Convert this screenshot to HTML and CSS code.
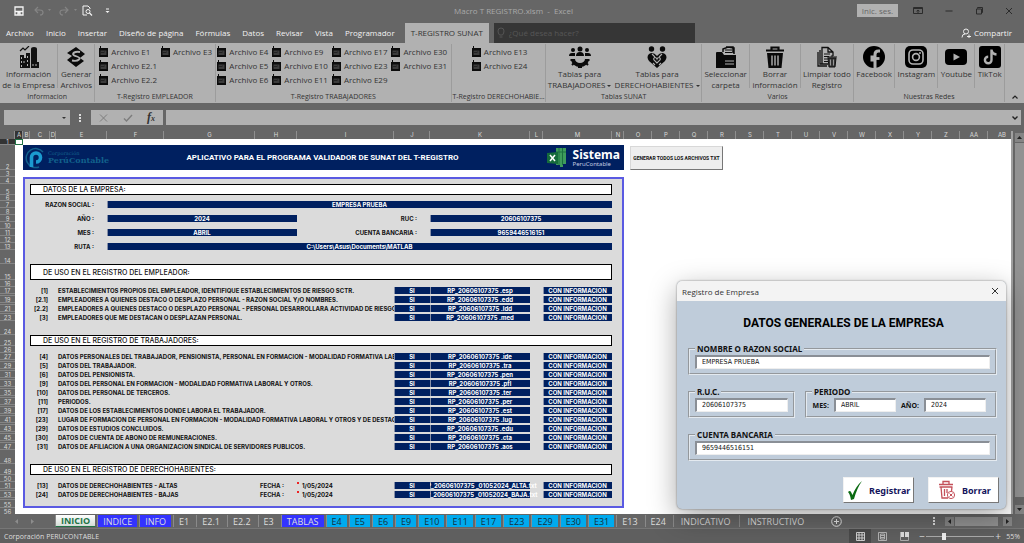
FILE: index.html
```html
<!DOCTYPE html>
<html lang="es">
  <head>
    <meta charset="UTF-8" />
    <meta name="viewport" content="width=device-width, initial-scale=1.0" />
    <title>Macro T REGISTRO.xlsm - Excel</title>
    <link rel="stylesheet" href="styles.css">
  </head>
  <body>
    <!-- shared icons -->
    <svg width="0" height="0" class="defs">
      <symbol id="file" viewBox="0 0 9 11">
        <path d="M0 2h1V0h1v2h7v9H0z" fill="#0c0c0c" />
        <path d="M1.5 4.5h6v4.500h-6z" fill="#3c3c3c" />
        <path d="M2 7l1-1 1 1 1-1 1 0" stroke="#111" stroke-width=".6" fill="none" />
      </symbol>
    </svg>

    <div class="title-bar">
      <div class="quick">
        <svg width="10" height="10" viewBox="0 0 10 10"><path d="M1 1h8v8H1zM1 5.500h8M4 9V7h2v2" fill="none" stroke="#f4f4f4" stroke-width="1.300" /></svg>
        <svg width="17" height="10" viewBox="0 0 17 10"><path d="M4 1L1 4l3 3M1 4h5q3 0 3 2.500T6 9" fill="none" stroke="#858585" stroke-width="1.200" /><path d="M14 3h3l-1.500 2z" fill="#858585" /></svg>
        <svg width="18" height="10" viewBox="0 0 18 10"><path d="M6 1l3 3-3 3M9 4H4Q1 4 1 6.500T4 9" fill="none" stroke="#858585" stroke-width="1.200" /><path d="M15 3h3l-1.500 2z" fill="#858585" /></svg>
        <svg width="11" height="11" viewBox="0 0 11 11"><path d="M5 10H1V1h5l2 2v1" fill="none" stroke="#f4f4f4" /><circle cx="6" cy="6.500" r="2" fill="none" stroke="#f4f4f4" /><path d="M7.500 8l2.500 2.500" stroke="#f4f4f4" stroke-width="1.300" /></svg>
        <svg width="5" height="6" viewBox="0 0 5 6"><path d="M1 1h3" stroke="#f4f4f4" /><path d="M0.500 3h4l-2 2z" fill="#f4f4f4" /></svg>
      </div>
      <div class="doc-name">Macro T REGISTRO.xlsm &nbsp;-&nbsp; Excel</div>
      <div class="window-tools">
        <button class="sign-in">Inic. ses.</button>
        <svg width="10" height="8" viewBox="0 0 10 8"><path d="M.5 .5h9v6h-9zM1 1.500h8M5 6V3M3.500 4.300L5 3l1.500 1.300" fill="none" stroke="#2b2b2b" /></svg>
        <svg width="8" height="8" viewBox="0 0 8 8"><path d="M0.500 4h7" stroke="#2b2b2b" /></svg>
        <svg width="8" height="8" viewBox="0 0 8 8"><path d="M1.500 2h5v5h-5zM2.500 1.500v-1h5v5h-1" fill="none" stroke="#2b2b2b" /></svg>
        <svg width="8" height="8" viewBox="0 0 8 8"><path d="M1 1l6 6M7 1L1 7" stroke="#2b2b2b" /></svg>
      </div>
    </div>

    <nav class="menu">
      <a href="#">Archivo</a>
      <a href="#">Inicio</a>
      <a href="#">Insertar</a>
      <a href="#">Diseño de página</a>
      <a href="#">Fórmulas</a>
      <a href="#">Datos</a>
      <a href="#">Revisar</a>
      <a href="#">Vista</a>
      <a href="#">Programador</a>
      <a href="#" class="active">T-REGISTRO SUNAT</a>
      <label class="ask">
        <svg width="8" height="12" viewBox="0 0 8 12"><path d="M2.500 8Q1 6 1 4a3 3 0 0 1 6 0q0 2-1.500 4zM2.500 10h3" fill="none" stroke="#555" /></svg>
        <input type="text" placeholder="¿Qué desea hacer?" />
      </label>
      <a href="#" class="share">
        <svg width="10" height="10" viewBox="0 0 10 10"><circle cx="5" cy="3.500" r="2.500" fill="none" stroke="#eee" /><path d="M1 9.500Q1 6 4 6M6 8.500h4M8 6.500v3.500" fill="none" stroke="#eee" /></svg>
        Compartir
      </a>
    </nav>

    <div class="ribbon">
      <section class="group g-info">
        <div class="tools">
          <button class="big">
            <svg width="22" height="22" viewBox="0 0 22 22"><path d="M2 5l3-3 2 2 4-4" fill="none" stroke="#111" stroke-width="1.200" /><path d="M13 22V3q0-2 3-2t3 2v13h2v6zM2 9h4v3h2V7h4v15H2z" fill="#111" /><path d="M3.500 11v2M3.500 15v2M6 15v2M9.500 10v2M9.500 14v2M3.500 19v2M9.500 18v2M15 18v2M18 18v2" stroke="#b1b1b1" stroke-width="1" /></svg>
            <span>Información<br />de la Empresa</span>
          </button>
          <button class="big line">
            <svg width="22" height="22" viewBox="0 0 22 22"><path d="M11 1l9 7-5 4 4 3-8 6-9-7 5-4-5-3z" fill="#0a0a0a" /><path d="M15 6q-6-1-7 2 0 1.500 4 2.500 4 1.500 2 3-2 2-7 1" fill="none" stroke="#b1b1b1" stroke-width="1.800" /></svg>
            <span>Generar<br />Archivos</span>
          </button>
        </div>
        <h3>Informacion</h3>
      </section>
      <section class="group g-empleador">
        <div class="tools">
          <div class="files">
            <button><svg><use href="#file" /></svg>Archivo E1</button>
            <button><svg><use href="#file" /></svg>Archivo E2.1</button>
            <button><svg><use href="#file" /></svg>Archivo E2.2</button>
          </div>
          <div class="files">
            <button><svg><use href="#file" /></svg>Archivo E3</button>
          </div>
        </div>
        <h3>T-Registro EMPLEADOR</h3>
      </section>
      <section class="group g-trabajadores">
        <div class="tools">
          <div class="files">
            <button><svg><use href="#file" /></svg>Archivo E4</button>
            <button><svg><use href="#file" /></svg>Archivo E5</button>
            <button><svg><use href="#file" /></svg>Archivo E6</button>
          </div>
          <div class="files">
            <button><svg><use href="#file" /></svg>Archivo E9</button>
            <button><svg><use href="#file" /></svg>Archivo E10</button>
            <button><svg><use href="#file" /></svg>Archivo E11</button>
          </div>
          <div class="files">
            <button><svg><use href="#file" /></svg>Archivo E17</button>
            <button><svg><use href="#file" /></svg>Archivo E23</button>
            <button><svg><use href="#file" /></svg>Archivo E29</button>
          </div>
          <div class="files">
            <button><svg><use href="#file" /></svg>Archivo E30</button>
            <button><svg><use href="#file" /></svg>Archivo E31</button>
          </div>
        </div>
        <h3>T-Registro TRABAJADORES</h3>
      </section>
      <section class="group g-derecho">
        <div class="tools">
          <div class="files">
            <button><svg><use href="#file" /></svg>Archivo E13</button>
            <button><svg><use href="#file" /></svg>Archivo E24</button>
          </div>
        </div>
        <h3>T-Registro DERECHOHABIE...</h3>
      </section>
      <section class="group g-tablas">
        <div class="tools">
          <button class="big">
            <svg width="22" height="22" viewBox="0 0 22 22"><g fill="#0a0a0a"><circle cx="4" cy="4" r="2" /><circle cx="11" cy="3" r="2.500" /><circle cx="18" cy="4" r="2" /><path d="M0 10q0-3 3-3h3v3zM7 10q0-4 4-4t4 4zM22 10q0-3-3-3h-3v3z" /></g><path d="M4 13a7 6 0 0 0 14 0" fill="none" stroke="#0a0a0a" stroke-width="4" /><path d="M1.500 14h2M3 19l2-2M9 21h4M17 17l2 2M18.500 14h2" stroke="#0a0a0a" stroke-width="2" /></svg>
            <span>Tablas para<br />TRABAJADORES <i></i></span>
          </button>
          <button class="big">
            <svg width="22" height="22" viewBox="0 0 22 22"><g fill="#0a0a0a"><circle cx="5.500" cy="3" r="2.700" /><circle cx="16.500" cy="3" r="2.700" /><path d="M11 22L3 15Q0 11 3 8q4-3 8 2 4-5 8-2 3 3 0 7z" /></g><path d="M11 17l-3-3q-1-2 1-2.500 1.500 0 2 1.500.5-1.500 2-1.500 2 .5 1 2.500zM6 8l3 3M16 8l-3 3M7 17l2 2M15 17l-2 2" fill="none" stroke="#b1b1b1" stroke-width="1.100" /></svg>
            <span>Tablas para<br />DERECHOHABIENTES <i></i></span>
          </button>
        </div>
        <h3>Tablas SUNAT</h3>
      </section>
      <section class="group g-varios">
        <div class="tools">
          <button class="big">
            <svg width="22" height="22" viewBox="0 0 22 22"><path d="M1 22V7q0-1 1-1h5l2 3h12v13z" fill="#0a0a0a" /><path d="M8 6V3l5-2 6 1v6M11 1h7v6" fill="none" stroke="#0a0a0a" stroke-width="1.500" /><path d="M10 4h7M10 6.500h7" stroke="#0a0a0a" /><path d="M10 15h9M10 18h9" stroke="#b1b1b1" /></svg>
            <span>Seleccionar<br />carpeta</span>
          </button>
          <button class="big line">
            <svg width="22" height="22" viewBox="0 0 22 22"><path d="M3 7h16l-1.500 15h-13z" fill="#0a0a0a" /><path d="M2 4.500h18M7.500 4V1.500h7V4" fill="none" stroke="#0a0a0a" stroke-width="2.200" /><path d="M8 9.500v10M11 9.500v10M14 9.500v10" stroke="#b1b1b1" stroke-width="1.400" /></svg>
            <span>Borrar<br />información</span>
          </button>
          <button class="big line">
            <svg width="22" height="22" viewBox="0 0 22 22"><path d="M2 6v14h9M4 4v14h7M12 18H6V1.500h6l5 4.500v4M12 1.500V6h5" fill="none" stroke="#111" stroke-width="1.300" /><path d="M8 8h6M8 10.500h5M8 13h4M8 15.500h4" stroke="#111" stroke-width="1.200" /><path d="M12 12h8l-1 9h-6zM11 11h10M15 10h2" stroke="#111" fill="#333" /><path d="M14.500 13.500v6M17.500 13.500v6" stroke="#b1b1b1" stroke-width=".8" /></svg>
            <span>Limpiar todo<br />Registro</span>
          </button>
        </div>
        <h3>Varios</h3>
      </section>
      <section class="group g-redes">
        <div class="tools">
          <button class="big">
            <svg width="22" height="22" viewBox="0 0 22 22"><circle cx="11" cy="11" r="11" fill="#000" /><path d="M12 22v-8H9v-3h3V8.500Q12 5 15.500 5H17" fill="none" stroke="#b1b1b1" stroke-width="3" /><path d="M9 12.500h7.500" stroke="#b1b1b1" stroke-width="2.800" /></svg>
            <span>Facebook</span>
          </button>
          <button class="big line">
            <svg width="22" height="22" viewBox="0 0 22 22"><rect width="22" height="22" rx="5" /><rect x="4" y="4" width="14" height="14" rx="4" fill="none" stroke="#b1b1b1" stroke-width="1.600" /><circle cx="11" cy="11" r="3.400" fill="none" stroke="#b1b1b1" stroke-width="1.600" /><circle cx="15" cy="7" r="1" fill="#b1b1b1" /></svg>
            <span>Instagram</span>
          </button>
          <button class="big line">
            <svg width="22" height="22" viewBox="0 0 22 22"><rect y="3" width="22" height="16" rx="4" /><path d="M8.500 7.500l6.500 3.500-6.500 3.500z" fill="#b1b1b1" /></svg>
            <span>Youtube</span>
          </button>
          <button class="big line">
            <svg width="22" height="22" viewBox="0 0 22 22"><rect width="22" height="22" rx="3" /><path d="M12.500 3.500v10.500a3.300 3.300 0 1 1-3.300-3.300M12.500 4q.5 4 5 4.500" fill="none" stroke="#b1b1b1" stroke-width="2.400" /></svg>
            <span>TikTok</span>
          </button>
        </div>
        <h3>Nuestras Redes</h3>
      </section>
      <button class="collapse" aria-label="Contraer la cinta"><svg width="6" height="4" viewBox="0 0 6 4"><path d="M.5 3.500L3 1l2.500 2.500" fill="none" stroke="#222" stroke-width="1.200" /></svg></button>
    </div>

    <div class="formula-bar">
      <label class="name-box"><input type="text" aria-label="Cuadro de nombres" /><i></i></label>
      <span class="dots"></span>
      <div class="fx">
        <svg width="9" height="8" viewBox="0 0 9 8"><path d="M1 .5l7 7M8 .5l-7 7" stroke="#7c7c7c" /></svg>
        <svg width="10" height="8" viewBox="0 0 10 8"><path d="M1 4.500L3.500 7 9 1" fill="none" stroke="#7c7c7c" stroke-width="1.400" /></svg>
        <em>f<small>x</small></em>
      </div>
      <label class="formula"><input type="text" aria-label="Barra de fórmulas" /><svg width="6" height="4" viewBox="0 0 6 4"><path d="M.5 .5L3 3 5.500 .5" fill="none" stroke="#222" stroke-width="1.400" /></svg></label>
    </div>

    <main class="sheet">
      <div class="cells">
        <table>
          <colgroup>
            <col class="w15"><col class="w8"><col class="w7"><col class="w20"><col class="w6"><col class="w51"><col class="w57"><col class="w91"><col class="w42"><col class="w97"><col class="w36"><col class="w100"><col class="w13"><col class="w69"><col class="w12">
            <col class="w28" span="14">
          </colgroup>
          <thead>
            <tr>
              <th class="corner"></th><th class="on">A</th><th>B</th><th>C</th><th>D</th><th>E</th><th>F</th><th>G</th><th>H</th><th>I</th><th>J</th><th>K</th><th>L</th><th>M</th><th>N</th><th>O</th><th>P</th><th>Q</th><th>R</th><th>S</th><th>T</th><th>U</th><th>V</th><th>W</th><th>X</th><th>Y</th><th>Z</th><th>AA</th><th>AB</th>
            </tr>
          </thead>
          <tbody>
            <tr class="short"><th class="on">1</th><td class="cursor"></td></tr>
            <tr class="head">
              <th>2</th><td></td>
              <td colspan="13" class="banner">
                <div class="banner-row">
                  <div class="brand">
                    <svg width="20" height="22" viewBox="0 0 20 22"><path d="M18 5A9.500 9.500 0 1 0 14 20" fill="none" stroke="#12618c" stroke-width="1.500" /><path d="M6.500 20V10.500a4.500 4.500 0 1 1 4.500 4.500" fill="none" stroke="#1b9ad0" stroke-width="3.600" /></svg>
                    <p><small>Corporación</small>PerúContable</p>
                  </div>
                  <h1>APLICATIVO PARA EL PROGRAMA VALIDADOR DE SUNAT DEL T-REGISTRO</h1>
                  <div class="system">
                    <svg width="20" height="21" viewBox="0 0 20 21"><path d="M9 1h10v16h-3v3h-3v-2H9z" fill="#3f9c5c" /><path d="M12 1v17M15.500 1v17M9 5h10" stroke="#1c7040" /><path d="M0 6l11-1v12L0 16z" fill="#156c3c" /><path d="M3 8l5 6M8 8l-5 6" stroke="#fff" stroke-width="1.500" /></svg>
                    <p>Sistema<small>PeruContable</small></p>
                  </div>
                </div>
              </td>
            </tr>
            <tr><th>3</th><td></td></tr>
          </tbody>
          <tbody class="panel">
            <tr><th>4</th><td class="out" rowspan="52"></td><td class="left" rowspan="52"></td><td colspan="11" class="top"></td><td class="right" rowspan="52"></td></tr>
            <tr class="sec"><th>5</th><td colspan="11" class="box">DATOS DE LA EMPRESA:</td></tr>
            <tr class="short"><th>6</th><td colspan="11"></td></tr>
            <tr><th>7</th><td colspan="3" class="name">RAZON SOCIAL :</td><td colspan="8" class="bar">EMPRESA PRUEBA</td></tr>
            <tr><th>8</th><td colspan="11"></td></tr>
            <tr><th>9</th><td colspan="3" class="name">AÑO :</td><td colspan="3" class="bar">2024</td><td colspan="2" class="name">RUC :</td><td colspan="3" class="bar">20606107375</td></tr>
            <tr><th>10</th><td colspan="11"></td></tr>
            <tr><th>11</th><td colspan="3" class="name">MES :</td><td colspan="3" class="bar">ABRIL</td><td colspan="2" class="name">CUENTA BANCARIA :</td><td colspan="3" class="bar">9659446516151</td></tr>
            <tr><th>12</th><td colspan="11"></td></tr>
            <tr><th>13</th><td colspan="3" class="name">RUTA :</td><td colspan="8" class="bar">C:\Users\Asus\Documents\MATLAB</td></tr>
            <tr class="tall"><th>14</th><td colspan="11"></td></tr>
            <tr class="sec high"><th>15</th><td colspan="11" class="box">DE USO EN EL REGISTRO DEL EMPLEADOR:</td></tr>
            <tr><th>16</th><td colspan="11"></td></tr>
            <tr><th>17</th><td class="num">[1]</td><td colspan="6" class="text">ESTABLECIMIENTOS PROPIOS DEL EMPLEADOR, IDENTIFIQUE ESTABLECIMIENTOS DE RIESGO SCTR.</td><td class="bar">SI</td><td class="bar">RP_20606107375 .esp</td><td></td><td class="bar">CON INFORMACIÓN</td></tr>
            <tr class="gap"><th></th><td colspan="11"></td></tr>
            <tr><th>19</th><td class="num">[2.1]</td><td colspan="6" class="text">EMPLEADORES A QUIENES DESTACO O DESPLAZO PERSONAL - RAZON SOCIAL Y/O NOMBRES.</td><td class="bar">SI</td><td class="bar">RP_20606107375 .edd</td><td></td><td class="bar">CON INFORMACIÓN</td></tr>
            <tr class="gap"><th></th><td colspan="11"></td></tr>
            <tr><th>21</th><td class="num">[2.2]</td><td colspan="6" class="text">EMPLEADORES A QUIENES DESTACO O DESPLAZO PERSONAL - PERSONAL DESARROLLARÁ ACTIVIDAD DE RIESGO</td><td class="bar">SI</td><td class="bar">RP_20606107375 .ldd</td><td></td><td class="bar">CON INFORMACIÓN</td></tr>
            <tr class="gap"><th></th><td colspan="11"></td></tr>
            <tr><th>23</th><td class="num">[3]</td><td colspan="6" class="text">EMPLEADORES QUE ME DESTACAN O DESPLAZAN PERSONAL.</td><td class="bar">SI</td><td class="bar">RP_20606107375 .med</td><td></td><td class="bar">CON INFORMACIÓN</td></tr>
            <tr class="tall"><th>24</th><td colspan="11"></td></tr>
            <tr class="sec"><th>25</th><td colspan="11" class="box">DE USO EN EL REGISTRO DE TRABAJADORES:</td></tr>
            <tr><th>26</th><td colspan="11"></td></tr>
            <tr><th>27</th><td class="num">[4]</td><td colspan="6" class="text">DATOS PERSONALES DEL TRABAJADOR, PENSIONISTA, PERSONAL EN FORMACIÓN - MODALIDAD FORMATIVA LABORAL</td><td class="bar">SI</td><td class="bar">RP_20606107375 .ide</td><td></td><td class="bar">CON INFORMACIÓN</td></tr>
            <tr class="gap"><th></th><td colspan="11"></td></tr>
            <tr><th>29</th><td class="num">[5]</td><td colspan="6" class="text">DATOS DEL TRABAJADOR.</td><td class="bar">SI</td><td class="bar">RP_20606107375 .tra</td><td></td><td class="bar">CON INFORMACIÓN</td></tr>
            <tr class="gap"><th></th><td colspan="11"></td></tr>
            <tr><th>31</th><td class="num">[6]</td><td colspan="6" class="text">DATOS DEL PENSIONISTA.</td><td class="bar">SI</td><td class="bar">RP_20606107375 .pen</td><td></td><td class="bar">CON INFORMACIÓN</td></tr>
            <tr class="gap"><th></th><td colspan="11"></td></tr>
            <tr><th>33</th><td class="num">[9]</td><td colspan="6" class="text">DATOS DEL PERSONAL EN FORMACIÓN - MODALIDAD FORMATIVA LABORAL Y OTROS.</td><td class="bar">SI</td><td class="bar">RP_20606107375 .pfl</td><td></td><td class="bar">CON INFORMACIÓN</td></tr>
            <tr class="gap"><th></th><td colspan="11"></td></tr>
            <tr><th>35</th><td class="num">[10]</td><td colspan="6" class="text">DATOS DEL PERSONAL DE TERCEROS.</td><td class="bar">SI</td><td class="bar">RP_20606107375 .ter</td><td></td><td class="bar">CON INFORMACIÓN</td></tr>
            <tr class="gap"><th></th><td colspan="11"></td></tr>
            <tr><th>37</th><td class="num">[11]</td><td colspan="6" class="text">PERÍODOS.</td><td class="bar">SI</td><td class="bar">RP_20606107375 .per</td><td></td><td class="bar">CON INFORMACIÓN</td></tr>
            <tr class="gap"><th></th><td colspan="11"></td></tr>
            <tr><th>39</th><td class="num">[17]</td><td colspan="6" class="text">DATOS DE LOS ESTABLECIMIENTOS DONDE LABORA EL TRABAJADOR.</td><td class="bar">SI</td><td class="bar">RP_20606107375 .est</td><td></td><td class="bar">CON INFORMACIÓN</td></tr>
            <tr class="gap"><th></th><td colspan="11"></td></tr>
            <tr><th>41</th><td class="num">[23]</td><td colspan="6" class="text">LUGAR DE FORMACIÓN DE PERSONAL EN FORMACIÓN - MODALIDAD FORMATIVA LABORAL Y OTROS Y DE DESTAQUE</td><td class="bar">SI</td><td class="bar">RP_20606107375 .lug</td><td></td><td class="bar">CON INFORMACIÓN</td></tr>
            <tr class="gap"><th></th><td colspan="11"></td></tr>
            <tr><th>43</th><td class="num">[29]</td><td colspan="6" class="text">DATOS DE ESTUDIOS CONCLUIDOS.</td><td class="bar">SI</td><td class="bar">RP_20606107375 .edu</td><td></td><td class="bar">CON INFORMACIÓN</td></tr>
            <tr class="gap"><th></th><td colspan="11"></td></tr>
            <tr><th>45</th><td class="num">[30]</td><td colspan="6" class="text">DATOS DE CUENTA DE ABONO DE REMUNERACIONES.</td><td class="bar">SI</td><td class="bar">RP_20606107375 .cta</td><td></td><td class="bar">CON INFORMACIÓN</td></tr>
            <tr class="gap"><th></th><td colspan="11"></td></tr>
            <tr><th>47</th><td class="num">[31]</td><td colspan="6" class="text">DATOS DE AFILIACIÓN A UNA ORGANIZACIÓN SINDICAL DE SERVIDORES PÚBLICOS.</td><td class="bar">SI</td><td class="bar">RP_20606107375 .aos</td><td></td><td class="bar">CON INFORMACIÓN</td></tr>
            <tr class="tall"><th>48</th><td colspan="11"></td></tr>
            <tr class="sec"><th>49</th><td colspan="11" class="box">DE USO EN EL REGISTRO DE DERECHOHABIENTES:</td></tr>
            <tr><th>50</th><td colspan="11"></td></tr>
            <tr><th>51</th><td class="num">[13]</td><td colspan="4" class="text">DATOS DE DERECHOHABIENTES - ALTAS</td><td class="date">FECHA :</td><td class="date note">1/05/2024</td><td class="bar">SI</td><td class="bar spill"><div>RP_20606107375 _01052024_ALTA.txt</div></td><td></td><td class="bar">CON INFORMACIÓN</td></tr>
            <tr class="gap"><th></th><td colspan="11"></td></tr>
            <tr><th>53</th><td class="num">[24]</td><td colspan="4" class="text">DATOS DE DERECHOHABIENTES - BAJAS</td><td class="date">FECHA :</td><td class="date note">1/05/2024</td><td class="bar">SI</td><td class="bar spill"><div>RP_20606107375 _01052024_BAJA.txt</div></td><td></td><td class="bar">CON INFORMACIÓN</td></tr>
            <tr class="gap"><th></th><td colspan="11"></td></tr>
            <tr class="last"><th>55</th><td colspan="11" class="bottom"></td></tr>
          </tbody>
          <tbody>
            <tr><th>56</th></tr>
          </tbody>
        </table>
        <button class="generate">GENERAR TODOS LOS ARCHIVOS TXT</button>
      </div>
      <div class="scroll-v">
        <button aria-label="Arriba"><svg width="5" height="3"><path d="M0 3h5L2.500 0z" fill="#222" /></svg></button>
        <div class="thumb"></div>
        <button aria-label="Abajo"><svg width="5" height="3"><path d="M0 0h5L2.500 3z" fill="#222" /></svg></button>
      </div>

      <form class="dialog">
        <div class="dialog-title">
          <span>Registro de Empresa</span>
          <button type="button" aria-label="Cerrar"><svg width="8" height="8" viewBox="0 0 8 8"><path d="M1 1l6 6M7 1L1 7" stroke="#333" /></svg></button>
        </div>
        <div class="dialog-body">
          <h2>DATOS GENERALES DE LA EMPRESA</h2>
          <fieldset>
            <legend><label for="razon">NOMBRE O RAZON SOCIAL</label></legend>
            <input type="text" id="razon" value="EMPRESA PRUEBA" />
          </fieldset>
          <div class="pair">
            <fieldset class="ruc">
              <legend><label for="ruc">R.U.C.</label></legend>
              <input type="text" id="ruc" value="20606107375" />
            </fieldset>
            <fieldset class="period">
              <legend>PERIODO</legend>
              <div class="period-row">
                <label for="mes">MES:</label>
                <input type="text" id="mes" value="ABRIL" />
                <label for="anio">AÑO:</label>
                <input type="text" id="anio" value="2024" />
              </div>
            </fieldset>
          </div>
          <fieldset>
            <legend><label for="cuenta">CUENTA BANCARIA</label></legend>
            <input type="text" id="cuenta" value="9659446516151" />
          </fieldset>
          <div class="actions">
            <button type="button">
              <svg width="16" height="19" viewBox="0 0 16 19"><path d="M1 11q2-2 3 0l1.500 3Q9 5 15 0q-5 7-8 18l-3 1Q3 13 1 11z" fill="#0b6a12" /></svg>
              Registrar
            </button>
            <button type="button">
              <svg width="18" height="20" viewBox="0 0 18 20"><path d="M1 4.500h14M5 4V1.500h6V4M1.500 7h13M3 7l1 11h6M14 7l-.5 4M6.500 9v7M9 9v4" fill="none" stroke="#c4505a" stroke-width="1.300" /><circle cx="13" cy="15" r="3.600" fill="#fff" stroke="#c4505a" /><path d="M11.500 13.500l3 3M14.500 13.500l-3 3" stroke="#c4505a" /></svg>
              Borrar
            </button>
          </div>
        </div>
      </form>
    </main>

    <div class="tabs">
      <div class="arrows">
        <svg width="3" height="5"><path d="M3 0v5L0 2.500z" fill="#8d8d8d" /></svg>
        <svg width="3" height="5"><path d="M0 0v5l3-2.500z" fill="#8d8d8d" /></svg>
      </div>
      <button class="current">INICIO</button>
      <button class="indigo">INDICE</button>
      <button class="indigo">INFO</button>
      <button>E1</button>
      <button>E2.1</button>
      <button>E2.2</button>
      <button>E3</button>
      <button class="indigo">TABLAS</button>
      <button class="sky">E4</button>
      <button class="sky">E5</button>
      <button class="sky">E6</button>
      <button class="sky">E9</button>
      <button class="sky">E10</button>
      <button class="sky">E11</button>
      <button class="sky">E17</button>
      <button class="sky">E23</button>
      <button class="sky">E29</button>
      <button class="sky">E30</button>
      <button class="sky">E31</button>
      <button>E13</button>
      <button>E24</button>
      <button class="long">INDICATIVO</button>
      <button class="long">INSTRUCTIVO</button>
      <svg class="add" width="11" height="11" viewBox="0 0 11 11"><circle cx="5.500" cy="5.500" r="4.800" fill="none" stroke="#e4e4e4" /><path d="M3 5.500h5M5.500 3v5" stroke="#e4e4e4" /></svg>
      <span class="dots"></span>
      <div class="scroll-h">
        <button aria-label="Izquierda"><svg width="3" height="5"><path d="M3 0v5L0 2.500z" fill="#222" /></svg></button>
        <div class="thumb"></div>
        <button aria-label="Derecha"><svg width="3" height="5"><path d="M0 0v5l3-2.500z" fill="#222" /></svg></button>
      </div>
    </div>

    <footer class="status">
      <span class="company">Corporación PERUCONTABLE</span>
      <button class="view on" aria-label="Normal"><svg width="9" height="9" viewBox="0 0 9 9"><path d="M.5 .5h8v8h-8zM.5 3h8M.5 6h8M3 .5v8M6 .5v8" fill="none" stroke="#ddd" stroke-width=".9" /></svg></button>
      <button class="view" aria-label="Diseño de página"><svg width="9" height="9" viewBox="0 0 9 9"><path d="M.5 .5h8v8h-8zM2.500 2h4v5h-4zM3 3.500h3M3 5.500h3" fill="none" stroke="#bbb" stroke-width=".9" /></svg></button>
      <button class="view" aria-label="Salto de página"><svg width="9" height="9" viewBox="0 0 9 9"><path d="M0 0h4v5H0zM5 0h4v5H5z" fill="#ddd" /><path d="M.5 0v8.500h8V5" fill="none" stroke="#aaa" /></svg></button>
      <span class="sign">−</span>
      <input type="range" min="0" max="100" value="25" aria-label="Zoom" />
      <span class="sign">+</span>
      <span class="zoom">55%</span>
    </footer>
  </body>
</html>
```
FILE: styles.css
```css
* {
  box-sizing: border-box;
}

body {
  margin: 0;
  height: 100vh;
  display: flex;
  flex-direction: column;
  overflow: hidden;
  background-color: #666666;
  color: #333333;
  font-family: "Open Sans", "Noto Sans", sans-serif;
  font-size: 8px;
}

button,
input {
  margin: 0;
  padding: 0;
  border: none;
  border-radius: 0;
  outline: none;
  background: none;
  color: inherit;
  font: inherit;
}

svg {
  display: block;
  flex: none;
}

a {
  color: inherit;
  text-decoration: none;
}

.defs {
  position: absolute;
}

/* title bar */
.title-bar {
  display: flex;
  align-items: center;
  height: 23px;
  padding: 0 11px 2px 14px;
}

.quick,
.window-tools {
  display: flex;
  flex: 1;
  align-items: center;
}

.quick {
  gap: 8px;
}

.quick svg:first-child {
  margin-right: 2px;
}

.quick svg:nth-child(4) {
  margin-left: -3px;
}

.quick svg:last-child {
  margin-left: 4px;
}

.doc-name {
  color: #a9a9a9;
}

.window-tools {
  justify-content: flex-end;
  gap: 22px;
}

.sign-in {
  width: 41px;
  height: 13px;
  margin-right: -7px;
  background-color: #b1b1b1;
  color: #666666;
  line-height: 13px;
}

/* ribbon tabs */
.menu {
  display: flex;
  align-items: stretch;
  height: 20px;
  color: #f2f2f2;
  line-height: 20px;
  white-space: nowrap;
}

.menu a {
  padding: 0 6px;
}

.menu a.active {
  margin-left: 4px;
  background-color: #b1b1b1;
  color: #333333;
}

.ask {
  display: flex;
  align-items: center;
  gap: 4px;
  width: 201px;
  margin-left: 5px;
  padding-left: 3px;
  background-color: #363636;
}

.ask input::placeholder {
  color: #575757;
  opacity: 1;
}

.menu .share {
  display: flex;
  align-items: center;
  gap: 3px;
  margin-left: auto;
  padding-right: 12px;
}

/* ribbon */
.ribbon {
  display: flex;
  height: 60px;
  padding-top: 1px;
  background-color: #b1b1b1;
}

.group {
  display: flex;
  flex-direction: column;
  flex-basis: 0;
  min-width: 0;
  margin-bottom: 1px;
  border-right: 1px solid #9c9c9c;
}

.g-info {
  flex-grow: 95;
}

.g-empleador {
  flex-grow: 120;
}

.g-trabajadores {
  flex-grow: 237;
}

.g-derecho {
  flex-grow: 94;
}

.g-tablas {
  flex-grow: 156;
}

.g-varios {
  flex-grow: 152;
}

.g-redes {
  flex-grow: 151;
}

.group h3 {
  margin: 0;
  font-size: 7px;
  font-weight: 400;
  line-height: 10px;
  text-align: center;
  white-space: nowrap;
}

.tools {
  display: flex;
  flex: 1;
  justify-content: center;
}

.big {
  display: flex;
  flex: 1 1 auto;
  flex-direction: column;
  align-items: center;
  padding-top: 2px;
  line-height: 11px;
  white-space: nowrap;
}

.big.line {
  height: 44px;
  border-left: 1px solid #9c9c9c;
}

.big i,
.name-box i {
  display: inline-block;
  border: 2px solid transparent;
  border-top-color: #333333;
  border-bottom: none;
  vertical-align: middle;
}

.files {
  flex: 1;
  padding-left: 4px;
}

.g-trabajadores .tools {
  padding-right: 6px;
}

.g-derecho .files {
  padding-left: 20px;
}

.files button {
  display: flex;
  align-items: center;
  gap: 3px;
  height: 14px;
  white-space: nowrap;
}

.files svg {
  width: 9px;
  height: 11px;
}

.collapse {
  display: flex;
  align-items: flex-end;
  justify-content: center;
  width: 19px;
  padding-bottom: 4px;
}

/* formula bar */
.formula-bar {
  display: flex;
  align-items: center;
  height: 28px;
  padding: 1px 3px 0 4px;
}

.name-box,
.fx,
.formula {
  display: flex;
  align-items: center;
  height: 15px;
  background-color: #b1b1b1;
}

.name-box {
  width: 66px;
  padding-right: 4px;
}

.name-box input,
.formula input {
  flex: 1;
  min-width: 0;
}

.dots {
  width: 2px;
  height: 8px;
  background: repeating-linear-gradient(#dddddd 0 2px, transparent 2px 3px);
}

.formula-bar .dots {
  margin: 0 10px 0 9px;
}

.fx {
  justify-content: space-between;
  width: 72px;
  padding: 0 8px;
}

.fx em {
  font-family: "Liberation Serif", serif;
  font-size: 12px;
  font-weight: 700;
  line-height: 14px;
}

.fx small {
  font-size: 8px;
}

.formula {
  flex: 1;
  margin-left: 3px;
  padding-right: 3px;
}

/* worksheet */
.sheet {
  position: relative;
  display: flex;
  flex: 1;
  min-height: 0;
}

.cells {
  position: relative;
  flex: 1;
  overflow: hidden;
  background-color: #ffffff;
}

table {
  width: 1016px;
  table-layout: fixed;
  border-spacing: 0;
  color: #111111;
  font-family: Inter, "Liberation Sans", sans-serif;
  font-size: 6px;
  font-weight: 700;
  line-height: 7px;
  white-space: nowrap;
}

.w6 { width: 6px; }
.w7 { width: 7px; }
.w8 { width: 8px; }
.w12 { width: 12px; }
.w13 { width: 13px; }
.w15 { width: 15px; }
.w20 { width: 20px; }
.w28 { width: 28px; }
.w36 { width: 36px; }
.w42 { width: 42px; }
.w51 { width: 51px; }
.w57 { width: 57px; }
.w69 { width: 69px; }
.w91 { width: 91px; }
.w97 { width: 97px; }
.w100 { width: 100px; }

td,
th {
  padding: 0;
}

tr {
  height: 7px;
}

th {
  background-color: #666666;
  color: #d8d8d8;
  font-weight: 400;
  vertical-align: bottom;
  box-shadow: inset 0 -1px #858585;
}

thead th {
  height: 8px;
  line-height: 8px;
  box-shadow: inset -1px 0 #8f8f8f;
}

th.on {
  background-color: #333333;
}

.short {
  height: 6px;
  line-height: 6px;
}

.head {
  height: 25px;
}

.sec {
  height: 11px;
}

.high {
  height: 16px;
}

.tall {
  height: 14px;
}

.gap {
  height: 2px;
  line-height: 2px;
}

.last {
  height: 8px;
}

.cursor {
  outline: 1px solid #217346;
  outline-offset: -1px;
}

.panel {
  background-color: #dbdbdb;
}

.panel .out {
  background-color: #ffffff;
}

.left {
  border: solid #5a5ae2;
  border-width: 2px 0 2px 2px;
}

.right {
  border: solid #5a5ae2;
  border-width: 2px 2px 2px 0;
}

.top {
  border-top: 2px solid #5a5ae2;
}

.bottom {
  border-bottom: 2px solid #5a5ae2;
}

.box {
  padding-left: 12px;
  border: 1px solid #000000;
  background-color: #ffffff;
  font-size: 7px;
  font-weight: 500;
}

.name {
  padding-right: 13px;
  text-align: right;
}

.bar {
  background-color: #002060;
  box-shadow: inset 1px 0 #8790a8;
  color: #ffffff;
  text-align: center;
}

.num {
  padding-right: 2px;
  text-align: right;
}

.text {
  overflow: hidden;
  padding-left: 8px;
}

.date {
  padding-left: 5px;
}

.note {
  background: linear-gradient(#ee2222, #ee2222) no-repeat 0 0 / 2px 2px;
}

.spill div {
  display: flex;
  justify-content: center;
  clip-path: inset(0 -10px 0 0);
}

.banner {
  background-color: #002060;
}

.banner-row {
  display: flex;
  align-items: center;
  height: 25px;
  padding: 0 4px 0 2px;
}

.banner h1,
.dialog h2 {
  margin: 0;
  font-family: Roboto, "Liberation Sans", sans-serif;
  font-weight: 700;
}

.banner h1 {
  color: #ffffff;
  font-size: 8px;
}

.brand,
.system {
  display: flex;
  flex: 1;
  align-items: center;
  gap: 3px;
}

.brand p,
.system p {
  margin: 0;
}

.brand p {
  color: #12618c;
  font-family: "DejaVu Serif", serif;
  font-size: 8px;
  line-height: 9px;
}

.brand small,
.system small {
  display: block;
  font-size: 5px;
  font-weight: 400;
  line-height: 5px;
}

.system {
  justify-content: flex-end;
  gap: 6px;
}

.system p {
  color: #ffffff;
  font-family: "Noto Sans", sans-serif;
  font-size: 12px;
  line-height: 12px;
}

.system small {
  color: #c2cbe0;
  font-size: 6px;
  line-height: 6px;
}

.generate {
  position: absolute;
  left: 630px;
  top: 15px;
  width: 93px;
  height: 24px;
  border: 1px solid #d8d8d8;
  border-right-color: #777777;
  border-bottom-color: #777777;
  background-color: #eeeeee;
  color: #111111;
  font-family: Roboto, "Liberation Sans", sans-serif;
  font-size: 5px;
  font-weight: 700;
  white-space: nowrap;
}

.scroll-v {
  display: flex;
  flex-direction: column;
  width: 13px;
  padding: 2px 2px 0;
  border-left: 2px solid #a0a0a0;
}

.scroll-v button,
.scroll-h button {
  display: flex;
  align-items: center;
  justify-content: center;
  width: 9px;
  height: 9px;
  background-color: #858585;
}

.thumb {
  background-color: #929292;
}

.scroll-v .thumb {
  flex: 1;
  width: 9px;
  margin: 1px 0 8px;
}

/* company form */
.dialog {
  position: absolute;
  right: 18px;
  bottom: 5px;
  width: 329px;
  overflow: hidden;
  border-radius: 5px;
  background-color: #bfccda;
  box-shadow: 0 0 2px rgba(0, 0, 0, 0.5), 0 8px 28px rgba(0, 0, 0, 0.35);
  color: #111111;
}

.dialog-title {
  display: flex;
  align-items: center;
  justify-content: space-between;
  height: 20px;
  padding: 0 7px 0 5px;
  background-color: #f3f3f3;
  color: #333333;
}

.dialog-body {
  padding: 0 7px 6px 11px;
}

.dialog h2 {
  color: #000000;
  font-size: 12px;
  line-height: 44px;
  text-align: center;
}

fieldset {
  min-width: 0;
  margin: 0 2px 13px 0;
  padding: 2px 5px 4px;
  border: 2px groove #e4eaf0;
}

legend {
  padding: 0 2px;
  font-family: "Noto Sans", sans-serif;
  font-weight: 700;
  line-height: 8px;
}

.dialog input {
  display: block;
  width: 100%;
  min-width: 0;
  height: 14px;
  padding: 0 5px 2px;
  border: solid #eeeeee;
  border-width: 2px 1px 1px 2px;
  border-top-color: #8a8f96;
  border-left-color: #8a8f96;
  background-color: #ffffff;
  font-family: "DejaVu Sans Condensed", "Open Sans", sans-serif;
  font-size: 7px;
}

.pair {
  display: flex;
  gap: 8px;
}

.ruc {
  width: 107px;
}

.period {
  flex: 1;
}

.period-row {
  display: flex;
  align-items: center;
  justify-content: flex-end;
  gap: 5px;
  padding-right: 4px;
  font-size: 7px;
  font-weight: 700;
}

.dialog .period-row input {
  width: 62px;
  font-weight: 400;
}

.actions {
  display: flex;
  justify-content: flex-end;
  gap: 14px;
  padding-top: 3px;
}

.actions button {
  display: flex;
  align-items: center;
  gap: 6px;
  width: 71px;
  height: 26px;
  padding-left: 3px;
  border: 1px solid #f2f2f2;
  border-right-color: #777777;
  border-bottom-color: #777777;
  background-color: #ffffff;
  color: #14145c;
  font-family: "Noto Sans", sans-serif;
  font-size: 9px;
  font-weight: 700;
}

.actions button:last-child {
  padding-left: 9px;
}

/* sheet tabs */
.tabs {
  display: flex;
  align-items: center;
  gap: 1px;
  height: 14px;
  padding-right: 12px;
  color: #dddddd;
  font-size: 9px;
  line-height: 11px;
}

.arrows {
  display: flex;
  gap: 13px;
  width: 54px;
  padding-left: 15px;
}

.tabs > button {
  height: 12px;
  padding: 0 5px;
  border-left: 1px solid #8a8a8a;
  border-right: 1px solid #666666;
}

.tabs > .current {
  border-bottom: 1px solid #217346;
  background: linear-gradient(#ffffff, #d3dcd6);
  color: #217346;
  font-weight: 700;
}

.tabs > .indigo {
  background-color: #3333ff;
}

.tabs > .sky {
  background-color: #00aaee;
  color: #14303c;
}

.tabs > .long {
  padding: 0 7px;
}

.add {
  margin-left: 18px;
}

.tabs .dots {
  margin-left: auto;
}

.scroll-h {
  display: flex;
  align-items: center;
  margin-left: 9px;
}

.scroll-h .thumb {
  width: 43px;
  height: 9px;
  margin: 0 5px 0 1px;
}

/* status bar */
.status {
  display: flex;
  align-items: center;
  height: 15px;
  padding: 0 4px;
  border-top: 1px solid #777777;
  background-color: #5f5f5f;
  color: #dddddd;
  font-size: 7px;
}

.company {
  flex: 1;
}

.view {
  display: flex;
  align-items: center;
  justify-content: center;
  width: 22px;
  height: 14px;
}

.view.on {
  background-color: #4a4a4a;
}

.sign {
  width: 8px;
  font-size: 10px;
  line-height: 10px;
  text-align: center;
}

.view + .sign {
  margin-left: 3px;
}

.status input {
  width: 68px;
  height: 8px;
  background: linear-gradient(#aaaaaa, #aaaaaa) no-repeat center / 100% 1px;
  -webkit-appearance: none;
  appearance: none;
}

.status input::-webkit-slider-thumb {
  width: 4px;
  height: 7px;
  background-color: #eeeeee;
  -webkit-appearance: none;
}

.zoom {
  width: 18px;
  text-align: right;
}
```
